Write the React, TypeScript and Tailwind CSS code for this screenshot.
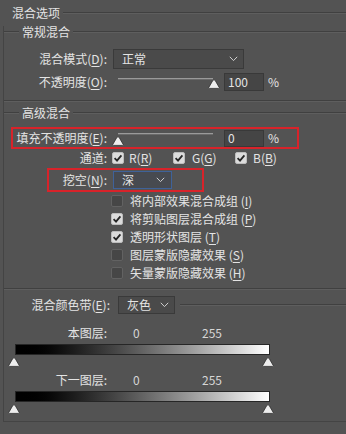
import React from "react";

const U = ({ c }: { c: string }) => (
  <span className="underline underline-offset-[2px] decoration-[1px]">{c}</span>
);

const Groove = ({ className = "" }: { className?: string }) => (
  <div className={"h-[2px] border-t border-b border-t-[#404040] border-b-[#5e5e5e] " + className} />
);

const Chevron = () => (
  <svg width="9" height="6" viewBox="0 0 9 6" className="shrink-0">
    <polyline points="0.8,0.8 4.5,4.6 8.2,0.8" fill="none" stroke="#cfcfcf" strokeWidth="1" />
  </svg>
);

const Thumb = () => (
  <svg width="12" height="10" viewBox="0 0 12 10" className="block">
    <path
      d="M6 0.8 C6.6 0.8 7 1.2 7.3 1.7 L11.2 8.4 C11.5 9 11.2 9.4 10.6 9.4 H1.4 C0.8 9.4 0.5 9 0.8 8.4 L4.7 1.7 C5 1.2 5.4 0.8 6 0.8 Z"
      fill="#ededed"
      stroke="#2e2e2e"
      strokeWidth="0.8"
    />
  </svg>
);

const Check = ({ on }: { on: boolean }) =>
  on ? (
    <div className="w-[12px] h-[12px] shrink-0 rounded-[2px] bg-[#dcdcdc] border border-[#bdbdbd] flex items-center justify-center">
      <svg width="10" height="10" viewBox="0 0 10 10">
        <polyline points="1.6,5.2 4,7.6 8.4,2.4" fill="none" stroke="#262626" strokeWidth="1.8" />
      </svg>
    </div>
  ) : (
    <div className="w-[12px] h-[12px] shrink-0 rounded-[2px] bg-[#464646] border border-[#626262]" />
  );

const Slider = ({ thumbLeft, trackTop, thumbTop, trackW }: { thumbLeft: string; trackTop: string; thumbTop: string; trackW: string }) => (
  <div className="relative ml-[6px] w-[105px] h-[18px] shrink-0">
    <div className={"ml-[5px] h-[2px] bg-[#9a9a9a] border-b border-b-[#6a6a6a] " + trackTop + " " + trackW} />
    <div className={"absolute " + thumbLeft + " " + thumbTop}>
      <Thumb />
    </div>
  </div>
);

export default function App() {
  const checks: [boolean, string, string][] = [
    [false, "将内部效果混合成组 (", "I"],
    [true, "将剪贴图层混合成组 (", "P"],
    [true, "透明形状图层 (", "T"],
    [false, "图层蒙版隐藏效果 (", "S"],
    [false, "矢量蒙版隐藏效果 (", "H"],
  ];
  return (
    <div className="w-[346px] h-[434px] overflow-hidden bg-[#535353] text-[12px] leading-[12px] text-[#e4e4e4] font-['Noto_Sans_CJK_SC',sans-serif]">
      <div className="flex items-center h-[26px]">
        <span className="ml-[12px]">混合选项</span>
        <Groove className="ml-[3px] flex-1" />
      </div>
      <div className="ml-[3px] h-[396px] border-l border-b border-l-[#444444] border-b-[#444444] flex flex-col">
        {/* 常规混合 */}
        <div className="flex items-center h-[12px]">
          <Groove className="w-[15px]" />
          <span className="ml-[3px] mr-[3px]">常规混合</span>
          <Groove className="flex-1" />
        </div>
        <div className="flex items-center mt-[11px] h-[20px]">
          <div className="w-[103px] text-right">
            混合模式(<U c="D" />):
          </div>
          <div className="ml-[6px] w-[131px] h-[20px] bg-[#4a4a4a] border border-[#3a3a3a] flex items-center justify-between pl-[8px] pr-[5px]">
            <span>正常</span>
            <Chevron />
          </div>
        </div>
        <div className="flex items-center mt-[4px] h-[18px]">
          <div className="w-[103px] text-right">
            不透明度(<U c="O" />):
          </div>
          <Slider thumbLeft="left-[95px]" trackTop="mt-[5px]" thumbTop="top-[6px]" trackW="w-[95px]" />
          <div className="ml-[6px] w-[40px] h-[18px] bg-[#454545] border border-[#393939] flex items-center pl-[3px]">100</div>
          <span className="ml-[4px]">%</span>
        </div>
        <Groove className="mt-[9px]" />
        {/* 高级混合 */}
        <div className="flex items-center mt-[5px] h-[12px]">
          <Groove className="w-[15px]" />
          <span className="ml-[3px] mr-[3px]">高级混合</span>
          <Groove className="flex-1" />
        </div>
        <div className="mt-[8px] ml-[7px] w-[288px] h-[22px] border-2 border-[#d8232a] flex items-center">
          <div className="w-[94px] text-right">
            填充不透明度(<U c="E" />):
          </div>
          <Slider thumbLeft="left-[-1px]" trackTop="mt-[4px]" thumbTop="top-[7px]" trackW="w-[95px]" />
          <div className="ml-[6px] w-[40px] h-[17px] bg-[#454545] border border-[#393939] flex items-center pl-[3px]">0</div>
          <span className="ml-[4px]">%</span>
        </div>
        <div className="flex items-center mt-[3px] h-[12px]">
          <div className="w-[103px] text-right">通道:</div>
          <div className="ml-[5px] w-[61px] flex items-center">
            <Check on />
            <span className="ml-[5px]">
              R(<U c="R" />)
            </span>
          </div>
          <div className="w-[62px] flex items-center">
            <Check on />
            <span className="ml-[7px]">
              G(<U c="G" />)
            </span>
          </div>
          <div className="flex items-center">
            <Check on />
            <span className="ml-[6px]">
              B(<U c="B" />)
            </span>
          </div>
        </div>
        <div className="mt-[4px] ml-[43px] w-[157px] h-[24px] border-2 border-[#d8232a] flex items-center">
          <div className="w-[58px] text-right">
            挖空(<U c="N" />):
          </div>
          <div className="ml-[6px] w-[59px] h-[18px] bg-[#474a50] border border-[#3f6299] flex items-center justify-between pl-[8px] pr-[6px]">
            <span>深</span>
            <Chevron />
          </div>
        </div>
        <div className="flex flex-col">
          {checks.map(([on, t, k]) => (
            <div key={k} className="flex items-center h-[18px] pl-[107px]">
              <Check on={on} />
              <span className="ml-[7px]">
                {t}
                <U c={k} />)
              </span>
            </div>
          ))}
        </div>
        <Groove className="mt-[6px]" />
        {/* 混合颜色带 */}
        <div className="flex items-center mt-[6px] h-[18px]">
          <div className="w-[106px] text-right">
            混合颜色带(<U c="E" />):
          </div>
          <div className="ml-[8px] w-[57px] h-[18px] bg-[#4a4a4a] border border-[#3a3a3a] flex items-center justify-between pl-[8px] pr-[5px]">
            <span>灰色</span>
            <Chevron />
          </div>
          <Groove className="ml-[5px] flex-1" />
        </div>
        <div className="flex items-center mt-[13px] h-[12px]">
          <div className="w-[103px] text-right">本图层:</div>
          <span className="ml-[26px] w-[69px] text-[#d6d6d6]">0</span>
          <span className="text-[#d6d6d6]">255</span>
        </div>
        <div className="mt-[5px] ml-[11px] w-[255px] h-[11px] border border-[#262626] bg-linear-to-r from-black to-white" />
        <div className="mt-[2px] ml-[4px] w-[266px] h-[10px] flex justify-between">
          <Thumb />
          <Thumb />
        </div>
        <div className="flex items-center mt-[7px] h-[12px]">
          <div className="w-[103px] text-right">下一图层:</div>
          <span className="ml-[26px] w-[69px] text-[#d6d6d6]">0</span>
          <span className="text-[#d6d6d6]">255</span>
        </div>
        <div className="mt-[5px] ml-[11px] w-[255px] h-[11px] border border-[#262626] bg-linear-to-r from-black to-white" />
        <div className="mt-[2px] ml-[4px] w-[266px] h-[10px] flex justify-between">
          <Thumb />
          <Thumb />
        </div>
      </div>
    </div>
  );
}
